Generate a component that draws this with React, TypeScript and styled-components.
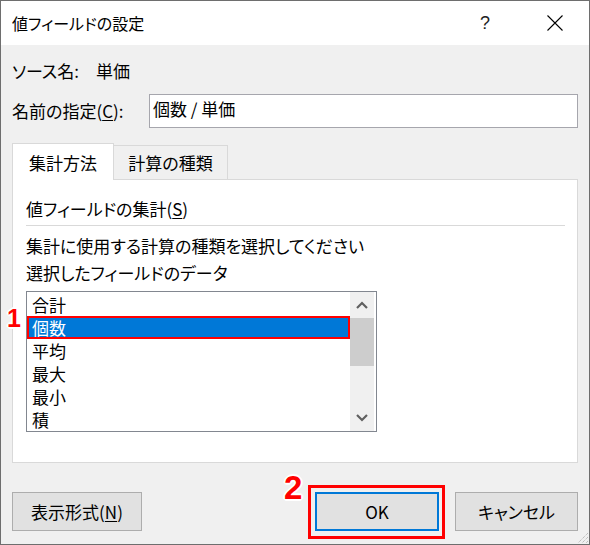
import React from 'react';
import styled, { createGlobalStyle } from 'styled-components';

const FONT = `"Noto Sans CJK JP", "Noto Sans", sans-serif`;

const GlobalStyle = createGlobalStyle`
  html, body {
    margin: 0;
    padding: 0;
    background: #ffffff;
  }
  body {
    font-family: ${FONT};
  }
  * {
    box-sizing: border-box;
  }
`;

const ITEMS = ['合計', '個数', '平均', '最大', '最小', '積'];

function Chevron({ up }: { up?: boolean }): JSX.Element {
  return (
    <svg width="12" height="8" viewBox="0 0 12 8">
      <path
        d={up ? 'M1 7 L6 2 L11 7' : 'M1 1 L6 6 L11 1'}
        fill="none"
        stroke="#606060"
        strokeWidth="2.2"
      />
    </svg>
  );
}

function App(): JSX.Element {
  return (
    <>
      <GlobalStyle />
      <Dialog>
        <TitleBar>
          <Title>値フィールドの設定</Title>
          <TitleButton>?</TitleButton>
          <TitleButton>
            <svg width="16" height="16" viewBox="0 0 16 16">
              <path d="M0.5 0.5 L15.5 15.5 M15.5 0.5 L0.5 15.5" stroke="#000" strokeWidth="1.1" />
            </svg>
          </TitleButton>
        </TitleBar>
        <Body>
          <SourceRow>
            <SourceLabel>ソース名:</SourceLabel>
            <span>単価</span>
          </SourceRow>
          <NameRow>
            <NameLabel>
              名前の指定(<u>C</u>):
            </NameLabel>
            <NameInput>個数 / 単価</NameInput>
          </NameRow>
          <TabStrip>
            <Tab active width={102}>
              集計方法
            </Tab>
            <Tab width={114}>計算の種類</Tab>
          </TabStrip>
          <Panel>
            <Heading>
              値フィールドの集計(<u>S</u>)
            </Heading>
            <Separator />
            <Hint>集計に使用する計算の種類を選択してください</Hint>
            <Hint second>選択したフィールドのデータ</Hint>
            <ListBox>
              <Marker small>1</Marker>
              <Items>
                {ITEMS.map((item) => (
                  <Item key={item} selected={item === '個数'}>
                    {item}
                  </Item>
                ))}
              </Items>
              <ScrollBar>
                <ScrollArrow>
                  <Chevron up />
                </ScrollArrow>
                <Thumb />
                <ScrollTrack />
                <ScrollArrow>
                  <Chevron />
                </ScrollArrow>
              </ScrollBar>
            </ListBox>
          </Panel>
          <Footer>
            <Button width={130}>
              表示形式(<u>N</u>)
            </Button>
            <Spacer />
            <Highlighted>
              <Marker>2</Marker>
              <Button width={124} primary>
                OK
              </Button>
            </Highlighted>
            <Button width={123}>キャンセル</Button>
          </Footer>
        </Body>
        <Grip>
          <svg width="14" height="14" viewBox="0 0 14 14">
            <path d="M13 3 L3 13 M13 7 L7 13 M13 11 L11 13" stroke="#a8a8a8" strokeWidth="1" strokeDasharray="1 1" />
          </svg>
        </Grip>
      </Dialog>
    </>
  );
}

const Dialog = styled.div`
  position: relative;
  width: 590px;
  height: 545px;
  border: 1px solid #6e6e6e;
  background: #f0f0f0;
  color: #000;
  display: flex;
  flex-direction: column;
  font-size: 17px;
  font-feature-settings: 'palt';
  overflow: hidden;
  u {
    text-underline-offset: 2px;
  }
`;
const TitleBar = styled.header`
  height: 44px;
  flex-shrink: 0;
  background: #ffffff;
  display: flex;
  align-items: center;
  padding: 0 11px 0 11px;
`;
const Title = styled.span`
  flex: 1;
  font-size: 16px;
`;
const TitleButton = styled.span`
  width: 46px;
  height: 44px;
  display: flex;
  align-items: center;
  justify-content: center;
  font-family: "Liberation Sans", sans-serif;
  font-size: 18px;
  color: #222;
  & + & {
    margin-left: 24px;
  }
`;
const Body = styled.main`
  flex: 1;
  display: flex;
  flex-direction: column;
  padding: 0 11px;
`;
const SourceRow = styled.div`
  margin-top: 13px;
  height: 24px;
  display: flex;
  align-items: center;
`;
const SourceLabel = styled.span`
  width: 84px;
`;
const NameRow = styled.div`
  margin-top: 12px;
  height: 34px;
  display: flex;
  align-items: center;
`;
const NameLabel = styled.span`
  width: 137px;
  padding-bottom: 2px;
`;
const NameInput = styled.div`
  flex: 1;
  height: 34px;
  border: 1px solid #a6a6ad;
  background: #ffffff;
  padding: 1px 0 0 3px;
  line-height: 26px;
`;
const TabStrip = styled.div`
  margin-top: 15px;
  height: 36px;
  display: flex;
  align-items: flex-end;
  position: relative;
  z-index: 1;
`;
const Tab = styled.div<{ active?: boolean; width: number }>`
  width: ${(p) => p.width}px;
  height: ${(p) => (p.active ? '37px' : '34px')};
  margin-bottom: ${(p) => (p.active ? '-1px' : '0')};
  padding-top: ${(p) => (p.active ? '7px' : '5px')};
  background: ${(p) => (p.active ? '#ffffff' : '#f0f0f0')};
  border: 1px solid #d9d9d9;
  border-bottom: none;
  border-left: ${(p) => (p.active ? '1px solid #d9d9d9' : 'none')};
  text-align: center;
  line-height: 24px;
`;
const Panel = styled.section`
  height: 284px;
  background: #ffffff;
  border: 1px solid #d9d9d9;
  padding: 0 12px 0 13px;
  display: flex;
  flex-direction: column;
`;
const Heading = styled.div`
  margin-top: 17px;
  height: 24px;
  line-height: 24px;
`;
const Separator = styled.hr`
  margin: 4px 0 0 0;
  border: none;
  border-top: 1px solid #d9d9d9;
  height: 0;
`;
const Hint = styled.div<{ second?: boolean }>`
  margin-top: ${(p) => (p.second ? '3px' : '8px')};
  height: 24px;
  line-height: 24px;
`;
const ListBox = styled.div`
  position: relative;
  margin-top: 6px;
  width: 351px;
  height: 141px;
  border: 1px solid #828790;
  background: #ffffff;
  display: flex;
  padding: 0 2px 0 0;
`;
const Marker = styled.span<{ small?: boolean }>`
  position: absolute;
  left: ${(p) => (p.small ? '-20px' : '-31px')};
  top: ${(p) => (p.small ? '14px' : '-21px')};
  font-family: "Liberation Sans", Arial, sans-serif;
  font-weight: bold;
  font-size: ${(p) => (p.small ? '25px' : '33px')};
  line-height: 1;
  color: #ff0000;
  text-shadow: -2px 0 #fff, 2px 0 #fff, 0 -2px #fff, 0 2px #fff, -1px -1px #fff, 1px 1px #fff,
    -1px 1px #fff, 1px -1px #fff;
  z-index: 2;
`;
const Items = styled.div`
  flex: 1;
  padding-top: 1px;
  display: flex;
  flex-direction: column;
`;
const Item = styled.div<{ selected?: boolean }>`
  height: 23px;
  flex-shrink: 0;
  border: 2px solid ${(p) => (p.selected ? '#ff0000' : 'transparent')};
  background: ${(p) => (p.selected ? '#0078d7' : 'transparent')};
  color: ${(p) => (p.selected ? '#ffffff' : '#000000')};
  padding-left: 3px;
  line-height: 19px;
`;
const ScrollBar = styled.div`
  width: 24px;
  background: #f0f0f0;
  display: flex;
  flex-direction: column;
`;
const ScrollArrow = styled.div`
  height: 26px;
  display: flex;
  align-items: center;
  justify-content: center;
`;
const Thumb = styled.div`
  height: 48px;
  background: #cdcdcd;
`;
const ScrollTrack = styled.div`
  flex: 1;
`;
const Footer = styled.footer`
  margin-top: 29px;
  height: 39px;
  display: flex;
`;
const Spacer = styled.div`
  flex: 1;
`;
const Highlighted = styled.div`
  position: relative;
  margin-right: 16px;
  display: flex;
  &::after {
    content: '';
    position: absolute;
    left: -7px;
    right: -6px;
    top: -7px;
    bottom: -8px;
    border: 3px solid #ff0000;
    pointer-events: none;
  }
`;
const Button = styled.button<{ width: number; primary?: boolean }>`
  width: ${(p) => p.width}px;
  height: 39px;
  margin: 0;
  padding: 0;
  background: #e1e1e1;
  border: ${(p) => (p.primary ? '2px solid #0078d7' : '1px solid #adadad')};
  font-family: ${FONT};
  font-feature-settings: 'palt';
  font-size: 17px;
  color: #000;
`;
const Grip = styled.div`
  position: absolute;
  right: 0;
  bottom: 0;
  width: 14px;
  height: 14px;
  display: flex;
`;

export default App;
